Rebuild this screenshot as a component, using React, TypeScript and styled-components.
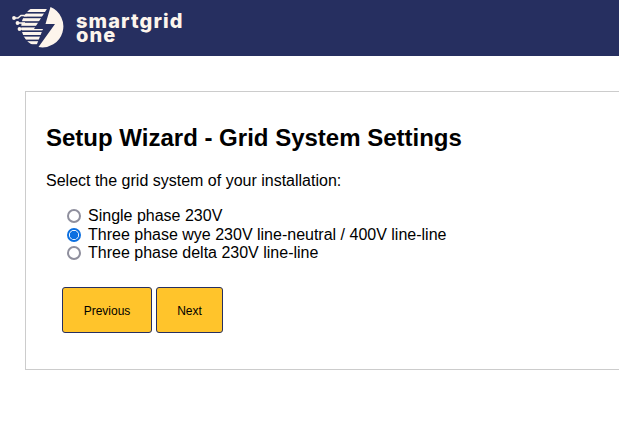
import React from "react"
import styled, { createGlobalStyle } from "styled-components"

const GlobalStyle = createGlobalStyle`
  html, body {
    margin: 0;
    padding: 0;
    height: 100%;
    background: #fff;
    overflow: hidden;
    font-family: "Liberation Sans", Arial, sans-serif;
    color: #000;
  }
`

const Header = styled.header`
  height: 56px;
  background: #262f60;
  display: flex;
  align-items: center;
  padding-left: 12px;
  gap: 10px;
`

const Wordmark = styled.div`
  font-family: Inter, "Open Sans", sans-serif;
  font-weight: 800;
  font-size: 20px;
  line-height: 14px;
  color: #fdf5ec;
  letter-spacing: 1.1px;
`

const WordLine = styled.div`
  height: 14px;
`

const Main = styled.main`
  padding: 35px 0 0 25px;
  overflow: hidden;
`

const Card = styled.section`
  width: 640px;
  height: 279px;
  box-sizing: border-box;
  border: 1px solid #ccc;
  padding: 32px 20px 0;
`

const Title = styled.h1`
  margin: 0;
  font-size: 24px;
  line-height: 28px;
  font-weight: 700;
`

const Intro = styled.p`
  margin: 20px 0 0;
  font-size: 16px;
  line-height: 18px;
`

const Options = styled.div`
  margin: 17px 0 0 21px;
  display: flex;
  flex-direction: column;
`

const Option = styled.label`
  display: flex;
  align-items: center;
  height: 18.5px;
  font-size: 16px;
  gap: 7px;
`

const Radio = styled.input.attrs({ type: "radio", name: "grid" })`
  appearance: none;
  box-sizing: border-box;
  width: 14px;
  height: 14px;
  margin: 0;
  border: 2px solid #8f8f9d;
  border-radius: 50%;
  background: #fff;

  &:checked {
    border-color: #0b6fe0;
    background: radial-gradient(circle, #0b6fe0 0 4px, #fff 4.5px);
  }
`

const Actions = styled.div`
  margin: 24px 0 0 16px;
  display: flex;
  gap: 4px;
`

const Button = styled.button<{ $width: number }>`
  width: ${({ $width }) => $width}px;
  height: 46px;
  background: #ffc42b;
  border: 1px solid #262f60;
  border-radius: 3px;
  font-family: "Liberation Sans", Arial, sans-serif;
  font-size: 12px;
  color: #000;
  padding: 2px 0 0;
`

const stripeRows = [3, 7.6, 12.2, 16.8, 21.4, 26, 30.6, 35.2]

function Logo() {
  return (
    <svg width="54" height="44" viewBox="0 0 54 44" aria-hidden="true">
      <defs>
        <clipPath id="logo-stripes">
          <path d="M36.500 .4A21 21 0 0 0 24 40.500L31 23H22Z" />
        </clipPath>
      </defs>
      {/* right half of the disc, cut by the bolt */}
      <path fill="#fdf5ec" d="M38.500 1A21 21 0 0 1 26.500 41L43 18H33.500Z" />
      <g fill="#fdf5ec" clipPath="url(#logo-stripes)">
        {stripeRows.map((y) => (
          <rect key={y} x="8" y={y} width="34" height="3" />
        ))}
      </g>
      <g stroke="#fdf5ec" strokeWidth="1.500" fill="none">
        <path d="M1 12H6L9 9.500H15" />
        <path d="M5 17H13" />
        <path d="M7 23H13" />
      </g>
      <g fill="#fdf5ec">
        <circle cx="2" cy="12" r="1.900" />
        <circle cx="5.500" cy="17" r="1.900" />
        <circle cx="7.500" cy="23" r="1.900" />
      </g>
    </svg>
  )
}

export default function App() {
  return (
    <>
      <GlobalStyle />
      <Header>
        <Logo />
        <Wordmark>
          <WordLine>smartgrid</WordLine>
          <WordLine>one</WordLine>
        </Wordmark>
      </Header>
      <Main>
        <Card>
          <Title>Setup Wizard - Grid System Settings</Title>
          <Intro>Select the grid system of your installation:</Intro>
          <Options>
            <Option>
              <Radio />
              Single phase 230V
            </Option>
            <Option>
              <Radio defaultChecked />
              Three phase wye 230V line-neutral / 400V line-line
            </Option>
            <Option>
              <Radio />
              Three phase delta 230V line-line
            </Option>
          </Options>
          <Actions>
            <Button $width={90}>Previous</Button>
            <Button $width={67}>Next</Button>
          </Actions>
        </Card>
      </Main>
    </>
  )
}
